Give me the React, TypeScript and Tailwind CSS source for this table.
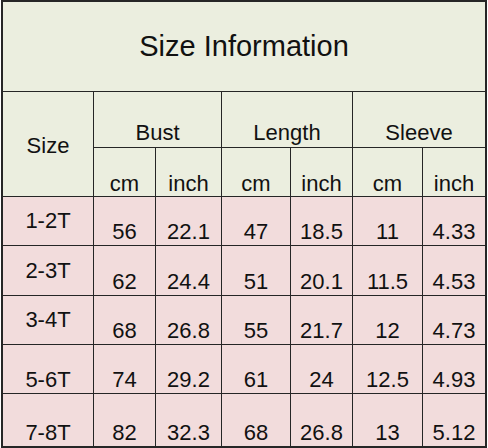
import { Fragment } from 'react';

const rows = [
    { size: '1-2T', mid: true, vals: ['56', '22.1', '47', '18.5', '11', '4.33'] },
    { size: '2-3T', mid: true, vals: ['62', '24.4', '51', '20.1', '11.5', '4.53'] },
    { size: '3-4T', mid: true, vals: ['68', '26.8', '55', '21.7', '12', '4.73'] },
    { size: '5-6T', mid: false, vals: ['74', '29.2', '61', '24', '12.5', '4.93'] },
    { size: '7-8T', mid: false, vals: ['82', '32.3', '68', '26.8', '13', '5.12'] },
];

export default function App() {
    return (
        <div className="w-[488px] h-[448px] bg-white text-[#111] font-['Liberation_Sans',Arial,sans-serif]">
            <div className="ml-px w-[486px] grid grid-cols-[90px_61px_65px_68px_61px_69px_62px] grid-rows-[89px_55px_48px_48px_49px_48px_48px_52px] gap-px bg-[#262626] border-2 border-[#262626]">
                {/* title */}
                <div className="col-span-7 bg-[#ebeedf] flex items-center justify-center text-[29px] leading-none">
                    Size Information
                </div>

                {/* header */}
                <div className="row-span-2 bg-[#ebeedf] flex items-center justify-center pt-1 text-[22px] leading-none">Size</div>
                {['Bust', 'Length', 'Sleeve'].map(h => (
                    <div key={h} className="col-span-2 bg-[#ebeedf] flex items-end justify-center pb-[3px] text-[22px] leading-none">
                        {h}
                    </div>
                ))}
                {['cm', 'inch', 'cm', 'inch', 'cm', 'inch'].map((u, i) => (
                    <div key={i} className="bg-[#ebeedf] flex items-end justify-center pb-px text-[22px] leading-none">
                        {u}
                    </div>
                ))}

                {/* data */}
                {rows.map(r => (
                    <Fragment key={r.size}>
                        <div className={`bg-[#f2dcdc] flex justify-center text-[22px] leading-none ${r.mid ? 'items-center' : 'items-end pb-[2px]'}`}>
                            {r.size}
                        </div>
                        {r.vals.map((v, i) => (
                            <div key={i} className="bg-[#f2dcdc] flex items-end justify-center pb-[2px] text-[22px] leading-none">
                                {v}
                            </div>
                        ))}
                    </Fragment>
                ))}
            </div>
        </div>
    );
}
